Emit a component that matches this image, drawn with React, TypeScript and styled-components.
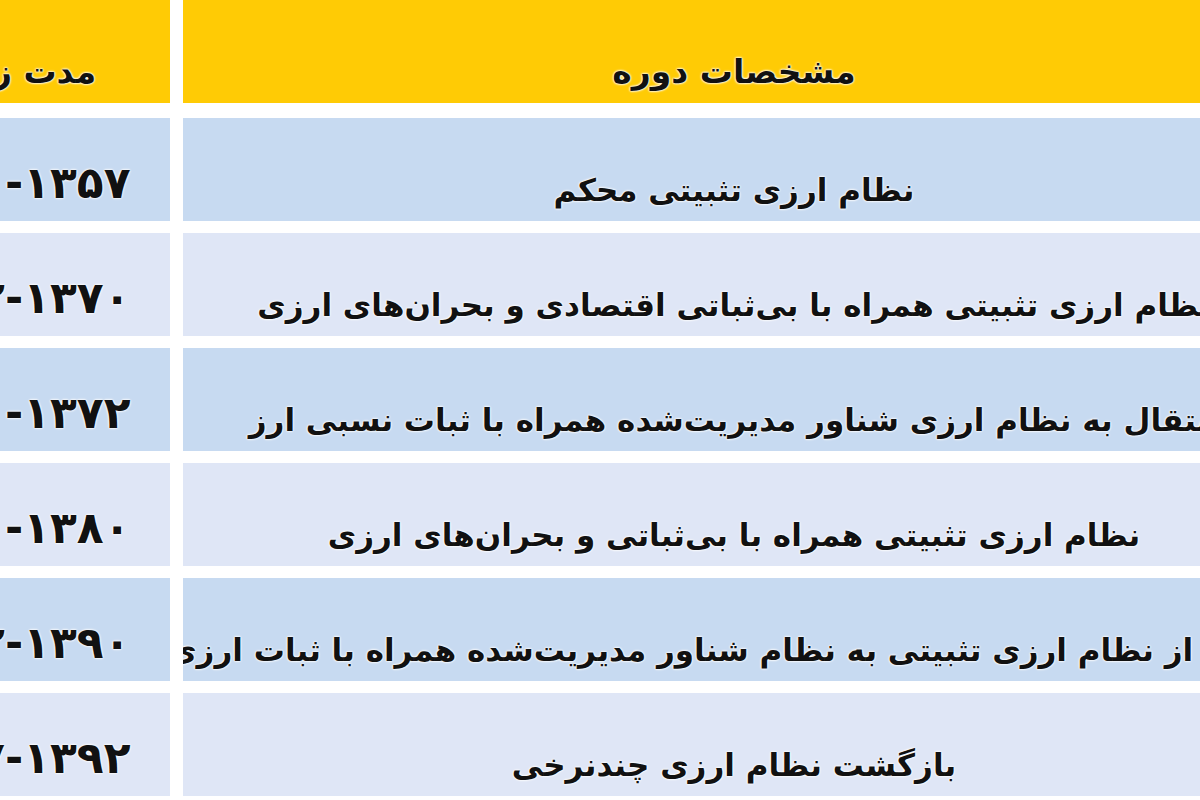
import React from 'react'
import styled, { createGlobalStyle } from 'styled-components'

type Tone = 'head' | 'dark' | 'light'

const GlobalStyle = createGlobalStyle`
    html, body {
        margin: 0;
        padding: 0;
        background: #ffffff;
        overflow: hidden;
    }
    body {
        width: 1200px;
        height: 800px;
        font-family: 'DejaVu Sans', sans-serif;
    }
`

const tones: Record<Tone, string> = {
    head: '#ffcb05',
    dark: '#c7daf1',
    light: '#dfe6f6',
}

const Table = styled.div`
    display: flex;
    flex-direction: column;
    gap: 12px;
    width: max-content;
    margin-left: -142px;
`

const Row = styled.div<{ $head?: boolean }>`
    display: grid;
    grid-template-columns: 312px 1102px;
    column-gap: 13px;
    height: 103px;
    margin-bottom: ${(props) => (props.$head ? '3px' : '0')};
`

const Cell = styled.div<{ $tone: Tone }>`
    display: flex;
    align-items: center;
    justify-content: center;
    background-color: ${(props) => tones[props.$tone]};
    direction: rtl;
    white-space: nowrap;
    overflow: hidden;
`

const Label = styled.span<{ $size?: number }>`
    font-size: ${(props) => props.$size || 31}px;
    font-weight: 700;
    color: #111111;
    text-shadow: 0 0 2px #ffffff, 0 0 2px #ffffff, 0 0 3px #ffffff;
    padding-top: 40px;
`

const Years = styled(Label)`
    direction: ltr;
    unicode-bidi: isolate;
    font-size: 44px;
    padding-top: 26px;
`

const rows: { years: string; text: string }[] = [
    { years: '۱۳۷۰-۱۳۵۷', text: 'نظام ارزی تثبیتی محکم' },
    { years: '۱۳۷۲-۱۳۷۰', text: 'نظام ارزی تثبیتی همراه با بی‌ثباتی اقتصادی و بحران‌های ارزی' },
    { years: '۱۳۸۰-۱۳۷۲', text: 'انتقال به نظام ارزی شناور مدیریت‌شده همراه با ثبات نسبی ارز' },
    { years: '۱۳۹۰-۱۳۸۰', text: 'نظام ارزی تثبیتی همراه با بی‌ثباتی و بحران‌های ارزی' },
    { years: '۱۳۹۲-۱۳۹۰', text: 'انتقال از نظام ارزی تثبیتی به نظام شناور مدیریت‌شده همراه با ثبات ارزی' },
    { years: '۱۳۹۷-۱۳۹۲', text: 'بازگشت نظام ارزی چندنرخی' },
]

const App = () => {
    return (
        <>
            <GlobalStyle />
            <Table>
                <Row $head>
                    <Cell $tone="head">
                        <Label $size={33}>مدت زمان</Label>
                    </Cell>
                    <Cell $tone="head">
                        <Label $size={33}>مشخصات دوره</Label>
                    </Cell>
                </Row>
                {rows.map(({ years, text }, index) => (
                    <Row key={index}>
                        <Cell $tone={index % 2 === 0 ? 'dark' : 'light'}>
                            <Years>{years}</Years>
                        </Cell>
                        <Cell $tone={index % 2 === 0 ? 'dark' : 'light'}>
                            <Label>{text}</Label>
                        </Cell>
                    </Row>
                ))}
            </Table>
        </>
    )
}

export default App
